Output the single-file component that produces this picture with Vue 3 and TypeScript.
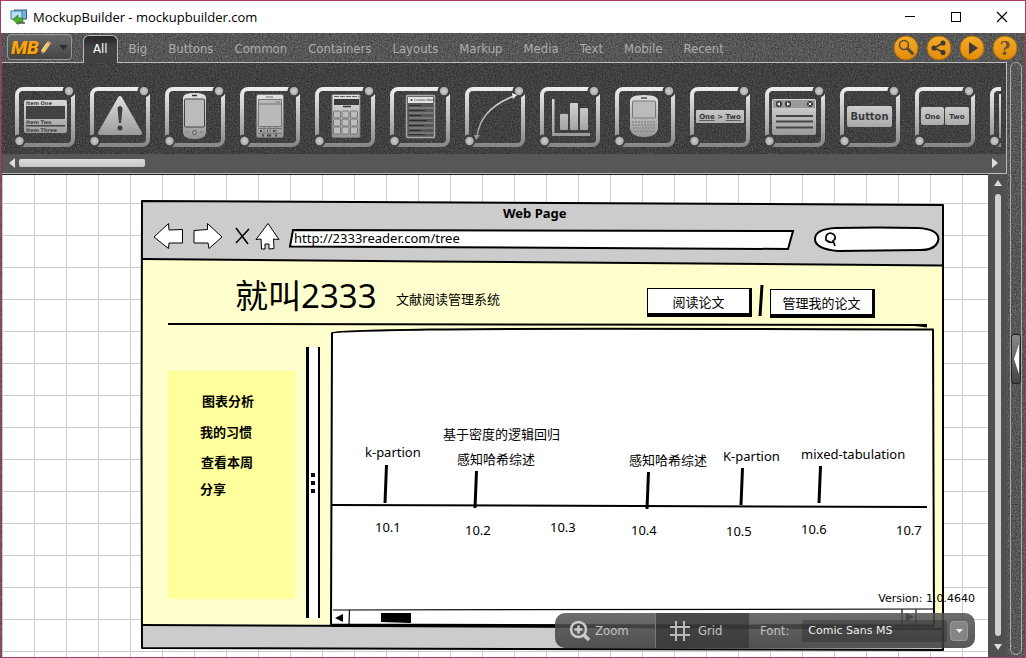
<script setup lang="ts">
import { ref } from 'vue'

const tabs = ['All', 'Big', 'Buttons', 'Common', 'Containers', 'Layouts', 'Markup', 'Media', 'Text', 'Mobile', 'Recent']
const activeTab = ref('All')

const tools = [
  'accordion', 'alert', 'android', 'pda', 'iphone', 'menu', 'arrow', 'chart',
  'blackberry', 'breadcrumb', 'window', 'button', 'buttonbar', 'frame',
]

const actions = ['Search', 'Share', 'Play', 'Help']

interface Label { text: string; x: number; y: number; kind?: string }

/* Positions are relative to the top-left corner of the artboard. */
const labels: Label[] = [
  { text: 'Web Page', x: 363, y: 13, kind: 'strong' },
  { text: '就叫2333', x: 95, y: 96, kind: 'heading' },
  { text: '文献阅读管理系统', x: 256, y: 99 },
  { text: '图表分析', x: 62, y: 201, kind: 'menu' },
  { text: '我的习惯', x: 60, y: 232, kind: 'menu' },
  { text: '查看本周', x: 61, y: 262, kind: 'menu' },
  { text: '分享', x: 60, y: 289, kind: 'menu' },
  { text: 'k-partion', x: 225, y: 252 },
  { text: '基于密度的逻辑回归', x: 303, y: 234 },
  { text: '感知哈希综述', x: 317, y: 259 },
  { text: '感知哈希综述', x: 489, y: 260 },
  { text: 'K-partion', x: 583, y: 256 },
  { text: 'mixed-tabulation', x: 661, y: 254 },
  { text: '10.1', x: 235, y: 327 },
  { text: '10.2', x: 325, y: 330 },
  { text: '10.3', x: 410, y: 327 },
  { text: '10.4', x: 491, y: 330 },
  { text: '10.5', x: 586, y: 331 },
  { text: '10.6', x: 661, y: 329 },
  { text: '10.7', x: 756, y: 330 },
]

const url = ref('http://2333reader.com/tree')
const query = ref('')
const font = ref('Comic Sans MS')
</script>

<template>
  <div class="app">
    <header class="titlebar">
      <svg class="app-icon" width="18" height="16" viewBox="0 0 18 16">
        <rect x="4.5" y="1" width="12" height="9" fill="#6db7e8" stroke="#345d78" />
        <rect x="1" y="2" width="11" height="8" fill="#b7e0f5" stroke="#4a7896" />
        <path d="M7 13h8v2H6z" fill="#777" />
        <path d="M3 10.5 8 6v3h5v4H8v2.500z" fill="#4caf2b" stroke="#27731a" stroke-width=".7" />
      </svg>
      <h1>MockupBuilder - mockupbuilder.com</h1>
      <div class="window-buttons">
        <button aria-label="Minimize"><svg width="12" height="12"><path d="M1 5.500h10" stroke="#000" /></svg></button>
        <button aria-label="Maximize"><svg width="12" height="12"><rect x="1.500" y="1.500" width="9" height="9" fill="none" stroke="#000" /></svg></button>
        <button aria-label="Close"><svg width="12" height="12"><path d="m1 1 10 10M11 1 1 11" stroke="#000" stroke-width="1.200" /></svg></button>
      </div>
    </header>

    <div class="shell">
      <svg class="grain" aria-hidden="true">
        <defs>
          <filter id="grain" x="0" y="0" width="100%" height="100%" color-interpolation-filters="sRGB">
            <feTurbulence type="fractalNoise" baseFrequency=".7" numOctaves="2" seed="4" />
            <feColorMatrix values="1.800 0 0 0 -0.500  1.800 0 0 0 -0.500  1.800 0 0 0 -0.500  0 0 0 0 1" />
          </filter>
          <linearGradient id="metal" gradientUnits="userSpaceOnUse" x1="0" y1="0" x2="0" y2="60">
            <stop offset="0" stop-color="#efefef" /><stop offset="1" stop-color="#858585" />
          </linearGradient>
          <radialGradient id="ball"><stop offset="0" stop-color="#cfcfcf" /><stop offset="1" stop-color="#aaa" /></radialGradient>
          <linearGradient id="gold" x1="0" y1="0" x2="0" y2="1">
            <stop offset="0" stop-color="#f5ab2b" /><stop offset="1" stop-color="#e08b07" />
          </linearGradient>
        </defs>
        <rect width="100%" height="100%" filter="url(#grain)" opacity=".2" />
      </svg>

      <div class="topbar">
        <button class="logo" aria-label="Main menu">
          <span>MB</span>
          <svg width="12" height="15" viewBox="0 0 12 15">
            <path d="m1 14 1-4L8 1l3 2-6 9z" fill="#f1c46b" />
            <path d="m8 1 3 2-1 1.500-3-2z" fill="#e98a80" />
            <path d="m6.500 3.500-5 7.500" stroke="#fff0c0" />
            <path d="m1 14 .5-2 1.300 1z" fill="#333" />
          </svg>
          <svg class="caret" width="9" height="5"><path d="M0 0h9L4.500 5z" fill="#2c2c2c" /></svg>
        </button>
        <nav class="tabs">
          <button v-for="tab in tabs" :key="tab" :class="{ active: tab === activeTab }" @click="activeTab = tab">{{ tab }}</button>
        </nav>
        <div class="actions">
          <button v-for="action in actions" :key="action" :aria-label="action">
            <svg width="26" height="26" viewBox="0 0 26 26">
              <circle cx="13" cy="13" r="12" fill="url(#gold)" stroke="#a96c10" />
              <g v-if="action === 'Search'" fill="none" stroke="#5b4a33">
                <circle cx="11" cy="10" r="4.500" stroke-width="1.500" />
                <path d="m14.500 13.500 5 5" stroke-width="3" stroke-linecap="round" />
              </g>
              <g v-else-if="action === 'Share'" fill="#3f3a33" stroke="#3f3a33" stroke-width="1.500">
                <path d="m17 8-9 5 9 4" fill="none" />
                <circle cx="17" cy="8" r="1.800" /><circle cx="8" cy="13" r="1.800" /><circle cx="17" cy="17.500" r="1.800" />
              </g>
              <path v-else-if="action === 'Play'" d="m10 7 9 6-9 6.500z" fill="#3f3a33" />
              <text v-else x="13" y="20" text-anchor="middle" class="question">?</text>
            </svg>
          </button>
        </div>
      </div>

      <div class="columns">
        <div class="main">
          <section class="ribbon" aria-label="Components">
            <div class="tools">
              <button v-for="tool in tools" :key="tool" :aria-label="tool">
                <svg width="60" height="60" viewBox="0 0 60 60">
                  <rect x="2" y="2" width="56" height="56" rx="6" fill="none" stroke="url(#metal)" stroke-width="4" />
                  <g fill="#3f3f3f"><circle cx="54" cy="4" r="6.500" /><circle cx="4" cy="54" r="6.500" /></g>
                  <circle cx="54" cy="4" r="4.200" fill="url(#ball)" /><circle cx="4.500" cy="54" r="4.200" fill="url(#ball)" />

                  <g v-if="tool === 'accordion'" fill="url(#metal)">
                    <rect x="9" y="13" width="43" height="33" rx="2" />
                    <path d="M11 19h39v13H11zM11 38h39v1.500H11z" fill="#424242" />
                    <g class="tiny"><text x="11" y="18">Item One</text><text x="11" y="37">Item Two</text><text x="11" y="45">Item Three</text></g>
                  </g>
                  <g v-else-if="tool === 'alert'">
                    <path d="M30 11 10 46h40z" fill="url(#metal)" stroke="url(#metal)" stroke-width="4" stroke-linejoin="round" />
                    <path d="M27.500 21q2.500-4 5 0L31 36h-2z" fill="#3d3d3d" /><circle cx="30" cy="41" r="2.500" fill="#3d3d3d" />
                  </g>
                  <g v-else-if="tool === 'android'">
                    <path d="M18 10q1-4 11.500-4T41 10v36q-1 6-11.500 6T18 46z" fill="url(#metal)" />
                    <rect x="19.500" y="12" width="20" height="28" rx="1" fill="#bbb" stroke="#444" />
                    <path d="M27 8.500h5" stroke="#333" stroke-width="1.500" />
                    <circle cx="29.500" cy="45.500" r="2" fill="#aaa" stroke="#555" /><path d="M20 45h4m11 0h4" stroke="#777" stroke-dasharray="2 1" />
                  </g>
                  <g v-else-if="tool === 'pda'">
                    <rect x="16.500" y="7.500" width="27" height="43" rx="2" fill="url(#metal)" stroke="#777" />
                    <path d="M26 10h7" stroke="#777" /><rect x="18.500" y="12.500" width="23" height="27" fill="#b9b9b9" stroke="#777" />
                    <path d="M19 17h22M36 15h4" stroke="#777" />
                    <path d="M18 41.500h24M18 46.500h24M24 40v7m6-7v7m6-7v7" stroke="#777" /><path d="M20 44h2m5 0h1m5 0h2M22 48.500h2m3 0h4m4 0h2" stroke="#444" stroke-width="2" />
                  </g>
                  <g v-else-if="tool === 'iphone'">
                    <rect x="17" y="7.500" width="28" height="43" rx="1" fill="url(#metal)" stroke="#777" />
                    <path d="M19 12h25v6H19z" fill="#3d3d3d" /><path d="M19 9.500h25" stroke="#666" stroke-dasharray="5 1" />
                    <path d="M28 19.500h8" stroke="#333" stroke-width="1.500" />
                    <g fill="#bcbcbc" stroke="#777">
                      <rect v-for="n in 9" :key="n" :x="18.5 + ((n - 1) % 3) * 8.5" :y="24 + Math.floor((n - 1) / 3) * 8" width="7" height="7" rx="1" />
                    </g>
                  </g>
                  <g v-else-if="tool === 'menu'">
                    <rect x="16.500" y="8.500" width="28" height="42" rx="1" fill="#555" stroke="#aaa" stroke-width="1.500" />
                    <path d="M18 10h25v6H18z" fill="#e4e4e4" /><circle cx="21.500" cy="13" r="1" fill="#333" /><text class="micro" x="24" y="14">Context Menu</text>
                    <path d="M19 18.500h12m-12 5h16m-16 5h12m-12 5h18m-18 5h15m-15 5h12m-12 4h16" stroke="#2c2c2c" stroke-width="1.200" />
                    <path d="M19 21h24m-24 5h24m-24 5h24m-24 5h24m-24 5h24m-24 5h24" stroke="#999" />
                  </g>
                  <g v-else-if="tool === 'arrow'">
                    <path d="M12 50Q15 22 49 9" fill="none" stroke="url(#metal)" stroke-width="1.500" />
                    <path d="m47 6 5 2-4 4z" fill="#eee" /><path d="m9 48 2 5 4-5z" fill="#999" />
                  </g>
                  <g v-else-if="tool === 'chart'" fill="url(#metal)">
                    <path d="M12 12h2.500v34H50v3H12z" />
                    <rect x="20" y="27" width="8" height="16" rx="1" /><rect x="30" y="16" width="8" height="27" rx="1" /><rect x="40" y="21" width="8" height="22" rx="1" />
                  </g>
                  <g v-else-if="tool === 'blackberry'">
                    <path d="M15 14q0-6 14-6t14 6v28q-2 8-14 8t-14-8z" fill="url(#metal)" />
                    <rect x="17.500" y="14" width="23" height="17" rx="1" fill="#bbb" stroke="#777" /><path d="M26 11h6" stroke="#555" stroke-width="1.500" />
                    <path d="M17 35h24M17 38h24M18 41h22M19 44h20" stroke="#777" stroke-dasharray="2 1" />
                  </g>
                  <g v-else-if="tool === 'breadcrumb'">
                    <rect x="6" y="23" width="48" height="13" rx="1" fill="url(#metal)" />
                    <text class="small" x="30" y="32" text-anchor="middle"><tspan text-decoration="underline">One</tspan> &gt; <tspan text-decoration="underline">Two</tspan></text>
                  </g>
                  <g v-else-if="tool === 'window'">
                    <rect x="7" y="12" width="44" height="36" rx="2" fill="url(#metal)" /><path d="M8 13h42v8H8z" fill="#999" />
                    <g fill="#333"><circle cx="14" cy="17" r="3" /><circle cx="23" cy="17" r="3" /><circle cx="45" cy="17" r="3" /></g>
                    <path d="m12 17 3-2v4zM25 17l-3-2v4z" fill="#fff" /><path d="m43.500 15.500 3 3m0-3-3 3" stroke="#fff" />
                    <path d="M11 29h37M11 34.500h37M11 40.500h37" stroke="#444" stroke-width="2" />
                  </g>
                  <g v-else-if="tool === 'button'">
                    <rect x="7" y="19" width="45" height="21" rx="2" fill="url(#metal)" />
                    <text class="big" x="29.500" y="33" text-anchor="middle">Button</text>
                  </g>
                  <g v-else-if="tool === 'buttonbar'">
                    <rect x="6" y="20" width="23" height="18" rx="2" fill="url(#metal)" /><rect x="30" y="20" width="24" height="18" rx="2" fill="url(#metal)" />
                    <g class="small" text-anchor="middle"><text x="17.500" y="32">One</text><text x="42" y="32">Two</text></g>
                  </g>
                  <rect v-else x="10" y="8" width="40" height="42" fill="none" stroke="url(#metal)" stroke-width="2" />
                </svg>
              </button>
            </div>
            <div class="hscroll">
              <svg width="6" height="10"><path d="M6 0v10L0 5z" fill="#ddd" /></svg>
              <div class="track"><div class="thumb"></div></div>
              <svg width="6" height="10"><path d="M0 0v10l6-5z" fill="#ddd" /></svg>
            </div>
          </section>

          <div class="workspace">
            <main class="canvas">
              <div class="artboard">
                <svg class="sketch" viewBox="140 200 806 454" aria-hidden="true">
                  <path d="M142 201 943 205V650L142 648z" fill="#ccc" />
                  <path d="M142 259 942 265V628L142 625z" fill="#ffffcd" />
                  <path d="M168 371H295V599H168z" fill="#ffff9b" />
                  <path d="M332 333Q333 330 430 329L933 329 934 626 331 624z" fill="#fff" />
                  <path d="M307 347H319V619H307z" fill="#fff" />
                  <g fill="none" stroke="#000" stroke-width="2" stroke-linejoin="round">
                    <path d="M142 201 Q500 201 943 205L943 650Q500 650 142 648L141.500 430z" />
                    <path d="M142 259Q300 260 430 261.500T943 265.500M142 625Q350 626 600 627T943 629" />
                    <path d="M168 324Q400 325 927 325M915 325l12 1.500M332 505Q600 505.500 927 507" />
                    <path d="M332 333Q333 331 430 329.500T933 329.500Q933 500 934 626L331 624.500Q332 450 332 333z" />
                    <path d="M331 625.500 934 626" stroke-width="3" />
                    <path d="M319 347V618" /><path d="M307.500 347V618" stroke-width="3" />
                    <path d="M386.500 465 385 503M476.500 471 475 508M648.500 472 647 509M742.500 468 741 505M820.500 466 819 503M762 285 760 316" stroke-width="3" />
                    <path d="M333 610 934 609M349.500 610 349 624M902 609V625M916 609V625" stroke-width="1.200" />
                  </g>
                  <path d="M311 473h4v4h-4zm0 8h4v4h-4zm0 8h4v4h-4zM381 613h30v10l-30-1zM335 618l8-4v8zM914 617l-8-4v8z" />
                  <g fill="#fff" stroke="#000">
                    <path d="M154 237 168.500 223.500 169 230 182.500 229.500V243L169 243 168.500 248.500z" />
                    <path d="M222 237 207.500 223.500V229.500L194 230.500V243L208 243 209 248.500z" />
                    <path d="M268 223.500 256 239.500 261 239 261.500 249 265 249V244H269V249L274 248.500 273.500 239 279 239.500z" />
                  </g>
                  <path d="m236 228 12 16m1-15-13 14" fill="none" stroke="#000" stroke-width="1.500" />
                  <g fill="#fff" stroke="#000" stroke-width="2">
                    <path d="M293 230 793 231 788 249 290 246.500z" />
                    <path d="M836 228Q880 227 918 228 938 229 938.500 239 937 250 920 250L838 251Q815 249 815 239 815 229 836 228z" />
                  </g>
                  <path d="M834 241q-3 3-8-1-1-6 4-7 6 1 5 6l-2 2 2 5" fill="none" stroke="#000" stroke-width="1.700" />
                </svg>
                <input v-model="url" class="url" aria-label="Address" />
                <input v-model="query" class="search" aria-label="Search" />
                <button class="sketch-button read">阅读论文</button>
                <button class="sketch-button manage">管理我的论文</button>
                <span v-for="(label, i) in labels" :key="i" class="label" :class="label.kind" :style="{ left: label.x + 'px', top: label.y + 'px' }">{{ label.text }}</span>
              </div>

              <div class="overlay">
                <p>Version: 1.0.4640</p>
                <div class="toolbox">
                  <button class="zoom">
                    <svg width="22" height="22" viewBox="0 0 22 22" fill="none" stroke="#ccc">
                      <circle cx="9.500" cy="9.500" r="7.500" stroke-width="2.500" /><path d="M9.500 5.500v8m-4-4h8" stroke-width="2.500" /><path d="m15 15 5 5" stroke-width="3.500" />
                    </svg>
                    Zoom
                  </button>
                  <button class="grid">
                    <svg width="20" height="20" fill="none" stroke="#bbb" stroke-width="2"><path d="M6 0v20m8-20v20M0 6h20M0 14h20" /></svg>
                    Grid
                  </button>
                  <label class="font">
                    <span>Font:</span>
                    <select v-model="font"><option>Comic Sans MS</option><option>Arial</option></select>
                    <svg width="20" height="20"><rect x="1.500" y=".5" width="17" height="19" rx="3" fill="#858585" stroke="#999" /><path d="M7 8h7l-3.500 4z" fill="#eee" /></svg>
                  </label>
                </div>
              </div>
            </main>
            <div class="vscroll">
              <svg width="8" height="6"><path d="M0 6h8L4 0z" fill="#ddd" /></svg>
              <div class="thumb"></div>
              <svg width="8" height="6"><path d="M0 0h8L4 6z" fill="#ddd" /></svg>
            </div>
          </div>
        </div>
        <aside class="side">
          <button aria-label="Expand panel"><svg width="7" height="32"><path d="M6 1v30L1 16z" fill="#fff" /></svg></button>
        </aside>
      </div>
    </div>
  </div>
</template>

<style>
body { margin: 0; overflow: hidden; }
</style>

<style scoped>
.app {
  box-sizing: border-box;
  display: flex;
  flex-direction: column;
  height: 100vh;
  border: 1px solid #a83a68;
  font-family: "DejaVu Sans Condensed", "Noto Sans", sans-serif;
  font-size: 13px;
}
button { padding: 0; border: 0; background: none; font: inherit; color: inherit; }
svg { display: block; flex: none; }

.titlebar { display: flex; align-items: center; height: 32px; padding-left: 9px; background: #fff; }
.titlebar h1 { margin: 0 auto 0 5px; font: 13px "Open Sans", sans-serif; color: #000; }
.window-buttons { display: flex; }
.window-buttons button { display: grid; place-items: center; width: 46px; height: 32px; }

.shell { position: relative; z-index: 0; flex: 1; min-height: 0; display: flex; flex-direction: column; padding-left: 1px; background: #535353; }
.grain { position: absolute; inset: 0; z-index: -1; width: 100%; height: 100%; }

.topbar { display: flex; height: 30px; }
.logo { box-sizing: border-box; display: flex; align-items: center; width: 65px; height: 26px; margin: 1px 11px 0 5px; padding-left: 2px; border: 1px solid #999; border-radius: 4px; background: linear-gradient(#686868, #454545); }
.logo span { width: 30px; font: italic 900 19px Roboto, sans-serif; color: #f5a417; text-shadow: 1px 1px 1px #573b0c; }
.caret { margin-left: 7px; }
.tabs { display: flex; flex: 1; color: #adadad; }
.tabs button { height: 30px; padding: 0 10px 0 11px; white-space: nowrap; }
.tabs .active { position: relative; box-sizing: border-box; height: 28px; margin-top: 2px; padding: 0 9px 2px; border: 1px solid #bbb; border-bottom: 0; border-radius: 6px 6px 0 0; background: linear-gradient(#252525, #414141 40%); color: #fff; }
.actions { display: flex; gap: 7px; align-items: center; margin-right: 7px; }
.question { font: bold 18px "DejaVu Serif", serif; fill: #6b5130; }

.columns { flex: 1; min-height: 0; display: flex; }
.main { flex: 1; min-width: 0; display: flex; flex-direction: column; }
.ribbon { box-sizing: border-box; display: flex; flex-direction: column; justify-content: space-between; height: 112px; margin-top: -1px; border: solid #bbb; border-width: 1px 1px 1px 0; background: rgb(0 0 0 / 25%); }
.tools { display: flex; gap: 15px; margin-right: 5px; padding: 24px 0 0 13px; overflow: hidden; }
.tools button { flex: none; width: 60px; }
.tiny { font: bold 5px "DejaVu Sans", sans-serif; fill: #444; }
.micro { font: 3px "DejaVu Sans", sans-serif; fill: #222; }
.small { font: bold 7px "DejaVu Sans", sans-serif; fill: #3a3a3a; }
.big { font: bold 11px "DejaVu Sans Condensed", sans-serif; fill: #3a3a3a; }
.hscroll { display: flex; align-items: center; gap: 4px; height: 18px; padding: 0 8px 1px 7px; background: #575757; }
.track { flex: 1; }
.track .thumb { width: 13%; height: 8px; border-radius: 2px; background: linear-gradient(#ddd, #c6c6c6); }

.workspace { flex: 1; min-height: 0; display: flex; }
.canvas {
  position: relative;
  flex: 1;
  overflow: hidden;
  border-top: 1px solid #222;
  background-color: #fff;
  background-image: linear-gradient(#ccc 1px, transparent 1px), linear-gradient(90deg, #ccc 1px, transparent 1px);
  background-size: 32px 32px;
  background-position: 0 28px;
}
.vscroll { display: flex; flex-direction: column; align-items: center; gap: 8px; width: 19px; padding: 6px 0 7px; box-sizing: border-box; background: #505050; }
.vscroll .thumb { flex: 1; width: 6px; border-radius: 3px; background: #d0d0d0; }

.artboard { position: absolute; left: 138px; top: 25px; width: 806px; height: 454px; font: 13px "Comic Sans MS", "Noto Sans", "Noto Sans CJK SC", sans-serif; color: #000; }
.sketch { position: absolute; inset: 0; width: 100%; height: 100%; }
.label { position: absolute; transform: translateY(-50%); line-height: 20px; white-space: nowrap; }
.strong { font-weight: 700; }
.menu { font-weight: 700; }
.heading { font-size: 33px; line-height: 40px; }
.artboard input { position: absolute; box-sizing: border-box; height: 16px; padding: 0; border: 0; outline: 0; background: none; font: inherit; font-size: 13px; }
.artboard .url { left: 154px; top: 30px; width: 490px; }
.artboard .search { left: 698px; top: 31px; width: 95px; }
.sketch-button { position: absolute; box-sizing: border-box; width: 105px; height: 29px; border: solid #000; border-width: 1px 3px 4px 1px; background: #fff; color: #000; }
.read { left: 507px; top: 88px; }
.manage { left: 630px; top: 89px; }

.overlay { position: absolute; right: 13px; bottom: 9px; }
.overlay p { margin: 0 0 6px; text-align: right; font: 11px/16px "DejaVu Sans", sans-serif; }
.toolbox { display: flex; height: 35px; border-radius: 10px; overflow: hidden; background: linear-gradient(rgb(85 85 85 / 86%), rgb(60 60 60 / 86%)); color: #c4c4c4; }
.toolbox button { display: flex; align-items: center; box-sizing: border-box; padding-left: 14px; }
.zoom { width: 101px; gap: 4px; }
.toolbox .zoom { border-right: 1px solid #777; }
.grid { width: 93px; gap: 8px; background: rgb(40 40 40 / 50%); }
.font { display: flex; align-items: center; box-sizing: border-box; width: 226px; padding-left: 11px; }
.font select { width: 145px; height: 22px; margin: 0 2px 0 13px; padding: 0 6px; border: 0; border-radius: 3px; background: rgb(40 40 40 / 40%); appearance: none; font: 11px "DejaVu Sans", sans-serif; color: #eee; }
.font svg { pointer-events: none; }

.side { display: flex; align-items: center; box-sizing: border-box; width: 12px; margin: -1px 3px 2px; border: 1px solid #aaa; border-radius: 6px; }
.side button { display: grid; place-items: center; box-sizing: border-box; width: 10px; height: 50px; border: 1px solid #222; border-radius: 3px; background: linear-gradient(#888, #444); }
</style>
